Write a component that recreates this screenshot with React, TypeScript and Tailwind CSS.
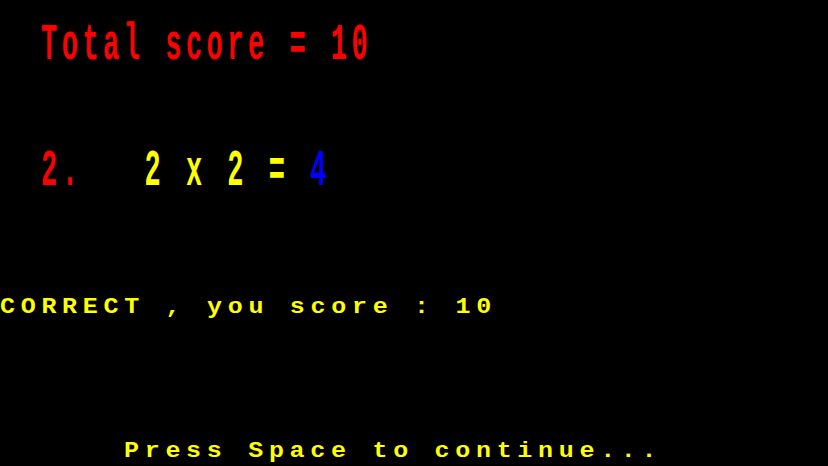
import React from 'react';

const big = "h-[27px] text-[27px] leading-none font-bold tracking-[4.5px] whitespace-pre origin-top scale-y-[1.93]";
const small = "h-[25px] text-[25px] leading-none font-bold tracking-[5.7px] whitespace-pre origin-top scale-y-[0.9]";

export default function App() {
  return (
    <div
      className="w-[828px] h-[466px] bg-black overflow-hidden pt-[20px]"
      style={{ fontFamily: '"Liberation Mono", "DejaVu Sans Mono", monospace' }}
    >
      {/* Total score */}
      <div className={`${big} pl-[41px] text-[#ff0000]`}>Total score = 10</div>

      {/* question */}
      <div className={`${big} mt-[99px] pl-[41px]`}>
        <span className="text-[#ff0000]">2.   </span>
        <span className="text-[#ffff00]">2 x 2 = </span>
        <span className="text-[#0000ff]">4</span>
      </div>

      {/* result */}
      <div className={`${small} mt-[123px] pl-[0px] text-[#ffff00]`}>CORRECT , you score : 10</div>

      {/* prompt */}
      <div className={`${small} mt-[119px] pl-[124px] text-[#ffff00]`}>Press Space to continue...</div>
    </div>
  );
}
